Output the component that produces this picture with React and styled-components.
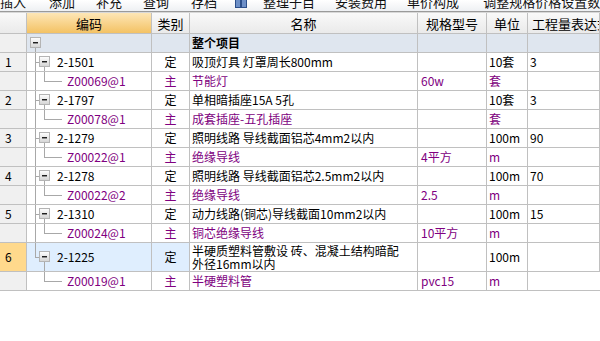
import React from 'react';
import styled, { createGlobalStyle, css } from 'styled-components';

const GlobalStyle = createGlobalStyle`
  html, body {
    margin: 0;
    padding: 0;
    background: #fff;
  }
  body {
    width: 600px;
    height: 341px;
    overflow: hidden;
    font-family: "Noto Sans CJK SC", "Noto Sans", sans-serif;
    font-size: 12px;
    color: #000;
  }
`;

const COLS = '27px 125px 38px 228px 69px 41px 72px';
const LINE = '#c0c0c0';
const TREE = '#a8a8a8';
const PURPLE = '#800080';

const Toolbar = styled.div`
  height: 11px;
  overflow: hidden;
  border-bottom: 1px solid #9a9a9a;
  background: linear-gradient(#ffffff, #eef0f3);
`;

const ToolbarRow = styled.div`
  display: flex;
  align-items: center;
  margin-top: -7px;
  height: 18px;
`;

const ToolButton = styled.span`
  font-size: 13px;
  line-height: 18px;
  margin-left: ${p => p.$gap}px;
  white-space: nowrap;
  color: #111;
`;

const ToolSep = styled.span`
  width: 1px;
  height: 18px;
  background: #b0b0b0;
  margin-left: ${p => p.$gap}px;
`;

const ToolIcon = styled.span`
  display: inline-flex;
  margin-left: ${p => p.$gap}px;
`;

const Grid = styled.div`
  display: grid;
  grid-template-columns: ${COLS};
  border-top: 1px solid #d8d8d8;
`;

const HeadCell = styled.div`
  height: 21px;
  box-sizing: border-box;
  border-right: 1px solid ${LINE};
  border-bottom: 1px solid ${LINE};
  display: flex;
  align-items: center;
  justify-content: ${p => (p.$left ? 'flex-start' : 'center')};
  padding-left: ${p => (p.$left ? '4px' : '0')};
  font-size: 13px;
  white-space: nowrap;
  overflow: hidden;
  background: ${p =>
    p.$active
      ? 'linear-gradient(#fde6b6, #f3c264)'
      : 'linear-gradient(#f9f9f9, #eaeaea)'};
  &:last-child {
    border-right: none;
  }
`;

const Cell = styled.div`
  position: relative;
  height: ${p => p.$h}px;
  box-sizing: border-box;
  border-right: 1px solid ${LINE};
  border-bottom: 1px solid ${LINE};
  display: flex;
  align-items: center;
  justify-content: ${p => (p.$center ? 'center' : 'flex-start')};
  padding-left: ${p => p.$pad ?? 2}px;
  line-height: 16px;
  white-space: nowrap;
  overflow: hidden;
  color: ${p => (p.$sub ? PURPLE : '#000')};
  font-weight: ${p => (p.$bold ? 700 : 400)};
  background: ${p => p.$bg || '#fff'};
  &:last-child {
    border-right: none;
  }
`;

const NumCell = styled(Cell)`
  padding-left: 5px;
  background: ${p => (p.$selected ? '#ffd98c' : '#f0f0f0')};
`;

const TwoLine = styled.div`
  line-height: 13px;
  white-space: normal;
`;

/* tree connectors drawn over the code cell */
const Line = styled.span`
  position: absolute;
  background: ${TREE};
  ${p =>
    p.$v
      ? css`
          width: 1px;
          left: ${p.$x}px;
          top: ${p.$y1};
          bottom: ${p.$y2};
        `
      : css`
          height: 1px;
          top: 50%;
          left: ${p.$x}px;
          width: ${p.$w}px;
        `}
`;

const Expander = styled.span`
  position: absolute;
  left: ${p => p.$x}px;
  top: 50%;
  margin-top: -6px;
  width: 11px;
  height: 11px;
  box-sizing: border-box;
  border: 1px solid #b4b4b4;
  background: linear-gradient(#fdfdfd, #d6d6d6);
  &::after {
    content: '';
    position: absolute;
    left: 2px;
    right: 2px;
    top: 4px;
    height: 1px;
    background: #202020;
    box-shadow: 0 1px 0 #8a8a8a;
  }
`;

const CodeText = styled.span`
  position: relative;
  margin-left: ${p => p.$x}px;
  color: ${p => (p.$sub ? PURPLE : '#000')};
`;

const items = [
  { n: 1, code: '2-1501', name: '吸顶灯具 灯罩周长800mm', unit: '10套', expr: '3',
    sub: { code: 'Z00069@1', name: '节能灯', spec: '60w', unit: '套' } },
  { n: 2, code: '2-1797', name: '单相暗插座15A 5孔', unit: '10套', expr: '3',
    sub: { code: 'Z00078@1', name: '成套插座-五孔插座', spec: '', unit: '套' } },
  { n: 3, code: '2-1279', name: '照明线路 导线截面铝芯4mm2以内', unit: '100m', expr: '90',
    sub: { code: 'Z00022@1', name: '绝缘导线', spec: '4平方', unit: 'm' } },
  { n: 4, code: '2-1278', name: '照明线路 导线截面铝芯2.5mm2以内', unit: '100m', expr: '70',
    sub: { code: 'Z00022@2', name: '绝缘导线', spec: '2.5', unit: 'm' } },
  { n: 5, code: '2-1310', name: '动力线路(铜芯)导线截面10mm2以内', unit: '100m', expr: '15',
    sub: { code: 'Z00024@1', name: '铜芯绝缘导线', spec: '10平方', unit: 'm' } },
  { n: 6, code: '2-1225', name: ['半硬质塑料管敷设 砖、混凝土结构暗配', '外径16mm以内'], unit: '100m', expr: '',
    selected: true, tall: true,
    sub: { code: 'Z00019@1', name: '半硬塑料管', spec: 'pvc15', unit: 'm' } },
];

function ItemRow({ item, last }) {
  const h = item.tall ? 29 : 19;
  const blue = item.selected ? '#dfeefe' : '#fff';
  return (
    <>
      <NumCell $h={h} $selected={item.selected}>{item.n}</NumCell>
      <Cell $h={h} $pad={0} $bg={blue}>
        <Line $v $x={8} $y1="-1px" $y2={last ? '50%' : '-1px'} />
        <Line $x={8} $w={4} />
        <Expander $x={12} />
        <Line $v $x={17} $y1="calc(50% + 5px)" $y2="-1px" />
        <CodeText $x={30}>{item.code}</CodeText>
      </Cell>
      <Cell $h={h} $center $pad={0} $bg={blue}>定</Cell>
      <Cell $h={h}>
        {Array.isArray(item.name) ? (
          <TwoLine>{item.name[0]}<br />{item.name[1]}</TwoLine>
        ) : item.name}
      </Cell>
      <Cell $h={h} />
      <Cell $h={h}>{item.unit}</Cell>
      <Cell $h={h}>{item.expr}</Cell>

      <NumCell $h={19} />
      <Cell $h={19} $pad={0}>
        {!last && <Line $v $x={8} $y1="-1px" $y2="-1px" />}
        <Line $v $x={17} $y1="-1px" $y2="50%" />
        <Line $x={17} $w={18} />
        <CodeText $x={40} $sub>{item.sub.code}</CodeText>
      </Cell>
      <Cell $h={19} $center $pad={0} $sub>主</Cell>
      <Cell $h={19} $sub>{item.sub.name}</Cell>
      <Cell $h={19} $sub $pad={3}>{item.sub.spec}</Cell>
      <Cell $h={19} $sub>{item.sub.unit}</Cell>
      <Cell $h={19} />
    </>
  );
}

function ToolbarStrip() {
  return (
    <Toolbar>
      <ToolbarRow>
        <ToolButton $gap={0}>插入</ToolButton>
        <ToolButton $gap={23}>添加</ToolButton>
        <ToolButton $gap={21}>补充</ToolButton>
        <ToolButton $gap={21}>查询</ToolButton>
        <ToolButton $gap={22}>存档</ToolButton>
        <ToolIcon $gap={18}>
          <svg width="12" height="12" viewBox="0 0 12 12">
            <rect x="0.5" y="2.5" width="5" height="9" fill="#6d8fc7" stroke="#2c4f8a" />
            <rect x="6.5" y="2.5" width="5" height="9" fill="#6d8fc7" stroke="#2c4f8a" />
          </svg>
        </ToolIcon>
        <ToolSep $gap={10} />
        <ToolButton $gap={6}>整理子目</ToolButton>
        <ToolButton $gap={20}>安装费用</ToolButton>
        <ToolButton $gap={20}>单价构成</ToolButton>
        <ToolButton $gap={24}>调整规格价格设置数</ToolButton>
        <ToolButton $gap={8}>批量换算</ToolButton>
      </ToolbarRow>
    </Toolbar>
  );
}

export default function App() {
  return (
    <>
      <GlobalStyle />
      <ToolbarStrip />
      <Grid>
        <HeadCell />
        <HeadCell $active>编码</HeadCell>
        <HeadCell>类别</HeadCell>
        <HeadCell>名称</HeadCell>
        <HeadCell>规格型号</HeadCell>
        <HeadCell>单位</HeadCell>
        <HeadCell $left>工程量表达式</HeadCell>

        <NumCell $h={19} />
        <Cell $h={19} $pad={0} $bg="#dfe6ef">
          <Expander $x={3} />
          <Line $v $x={8} $y1="calc(50% + 5px)" $y2="-1px" />
        </Cell>
        <Cell $h={19} $bg="#dfe6ef" />
        <Cell $h={19} $bold $bg="#dfe6ef">整个项目</Cell>
        <Cell $h={19} $bg="#dfe6ef" />
        <Cell $h={19} $bg="#dfe6ef" />
        <Cell $h={19} $bg="#dfe6ef" />

        {items.map((it, i) => (
          <ItemRow key={it.n} item={it} last={i === items.length - 1} />
        ))}
      </Grid>
    </>
  );
}
